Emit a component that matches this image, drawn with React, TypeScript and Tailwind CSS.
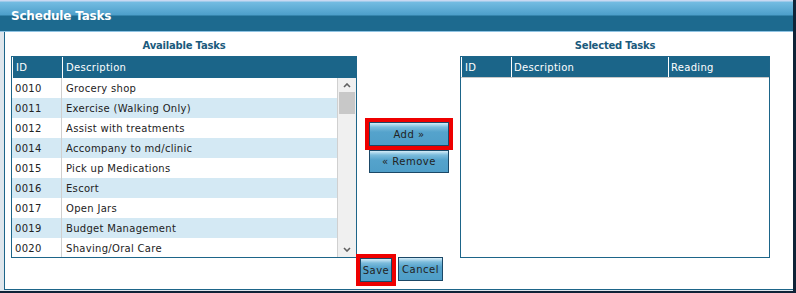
import React from "react";

const availableTasks: [string, string][] = [
  ["0010", "Grocery shop"],
  ["0011", "Exercise (Walking Only)"],
  ["0012", "Assist with treatments"],
  ["0014", "Accompany to md/clinic"],
  ["0015", "Pick up Medications"],
  ["0016", "Escort"],
  ["0017", "Open Jars"],
  ["0019", "Budget Management"],
  ["0020", "Shaving/Oral Care"],
];

const btn =
  "border border-[#1b4867] bg-[linear-gradient(to_bottom,#d4ecf8_0px,#7cbcdc_4px,#55a3cc_9px,#4f9ec8_100%)] text-[#222] text-[10px] tracking-[0.5px] flex items-center justify-center";

const Chevron: React.FC<{ up?: boolean }> = ({ up }) => (
  <svg width="8" height="5" viewBox="0 0 8 5" className="block">
    <path
      d={up ? "M1 4 L4 1 L7 4" : "M1 1 L4 4 L7 1"}
      fill="none"
      stroke="#606060"
      strokeWidth="1.6"
    />
  </svg>
);

const App: React.FC = () => {
  return (
    <div
      className="w-[796px] h-[293px] flex flex-col border-r-[3px] border-b-2 border-[#0f2337] bg-[#dfe6ec] overflow-hidden"
      style={{ fontFamily: '"DejaVu Sans", Verdana, sans-serif' }}
    >
      {/* title bar */}
      <div className="h-[32px] shrink-0 flex items-center pl-[11px] bg-[linear-gradient(to_bottom,#c9d9f2_0px,#c9d9f2_1px,#74bce2_2px,#4d9fca_15px,#1d6a8f_16px,#1d6a8f_31px,#8ec3e3_31px)]">
        <span className="text-white font-bold text-[12px] tracking-[-0.2px]">
          Schedule Tasks
        </span>
      </div>

      <div className="flex-1 flex pl-[4px] pb-[1px]">
        <div className="flex-1 bg-white border-l border-b border-[#1d6589] flex flex-col">
          <div className="flex pl-[6px]">
            {/* available */}
            <div className="w-[346px] flex flex-col">
              <div className="h-[24px] pt-[8px] leading-[12px] text-center font-bold text-[10px] tracking-[-0.2px] text-[#1a5a7c]">
                Available Tasks
              </div>
              <div className="h-[202px] border border-[#1d6589] flex flex-col text-[10px] tracking-[0.3px]">
                <div className="h-[21px] shrink-0 bg-[#1b6589] text-white flex">
                  <div className="w-[50px] border-l border-white pl-[3px] flex items-center">ID</div>
                  <div className="flex-1 border-l border-white pl-[3px] flex items-center">Description</div>
                </div>
                <div className="flex-1 flex overflow-hidden">
                  <div className="flex-1 flex flex-col border-r border-[#d0d0d0]">
                    {availableTasks.map(([id, desc], i) => (
                      <div
                        key={id}
                        className={`h-[20px] shrink-0 flex text-[#222] ${i % 2 ? "bg-[#d4e9f4]" : "bg-white"}`}
                      >
                        <div className="w-[50px] pl-[3px] flex items-center border-r border-[#d0d0d0]">{id}</div>
                        <div className="flex-1 pl-[4px] flex items-center">{desc}</div>
                      </div>
                    ))}
                  </div>
                  <div className="w-[18px] bg-[#f0f0f0] flex flex-col items-center">
                    <div className="h-[14px] flex items-center justify-center">
                      <Chevron up />
                    </div>
                    <div className="w-[16px] h-[22px] bg-[#c8c8c8]" />
                    <div className="flex-1" />
                    <div className="h-[16px] flex items-center justify-center">
                      <Chevron />
                    </div>
                  </div>
                </div>
              </div>
            </div>

            {/* move buttons */}
            <div className="w-[80px] ml-[12px] pt-[90px] flex flex-col gap-[4px]">
              <button className={`${btn} h-[24px] outline-4 outline-[#ee0000]`}>Add »</button>
              <button className={`${btn} h-[23px]`}>« Remove</button>
            </div>

            {/* selected */}
            <div className="w-[310px] ml-[11px] flex flex-col">
              <div className="h-[24px] pt-[8px] leading-[12px] text-center font-bold text-[10px] tracking-[-0.2px] text-[#1a5a7c]">
                Selected Tasks
              </div>
              <div className="h-[202px] border border-[#1d6589] flex flex-col text-[10px] tracking-[0.3px]">
                <div className="h-[21px] shrink-0 bg-[#1b6589] text-white flex border-b border-[#c8c8c8]">
                  <div className="w-[50px] border-l border-white pl-[3px] flex items-center">ID</div>
                  <div className="w-[157px] border-l border-white pl-[2px] flex items-center">Description</div>
                  <div className="flex-1 border-l border-white pl-[2px] flex items-center">Reading</div>
                </div>
                <div className="flex-1" />
              </div>
            </div>
          </div>

          {/* save / cancel */}
          <div className="flex justify-center items-start gap-[6px] pl-[5px] -mt-[1px]">
            <button className={`${btn} w-[32px] h-[24px] mt-[1px] outline-4 outline-[#ee0000]`}>Save</button>
            <button className={`${btn} w-[45px] h-[24px]`}>Cancel</button>
          </div>
        </div>
      </div>
    </div>
  );
};

export default App;
